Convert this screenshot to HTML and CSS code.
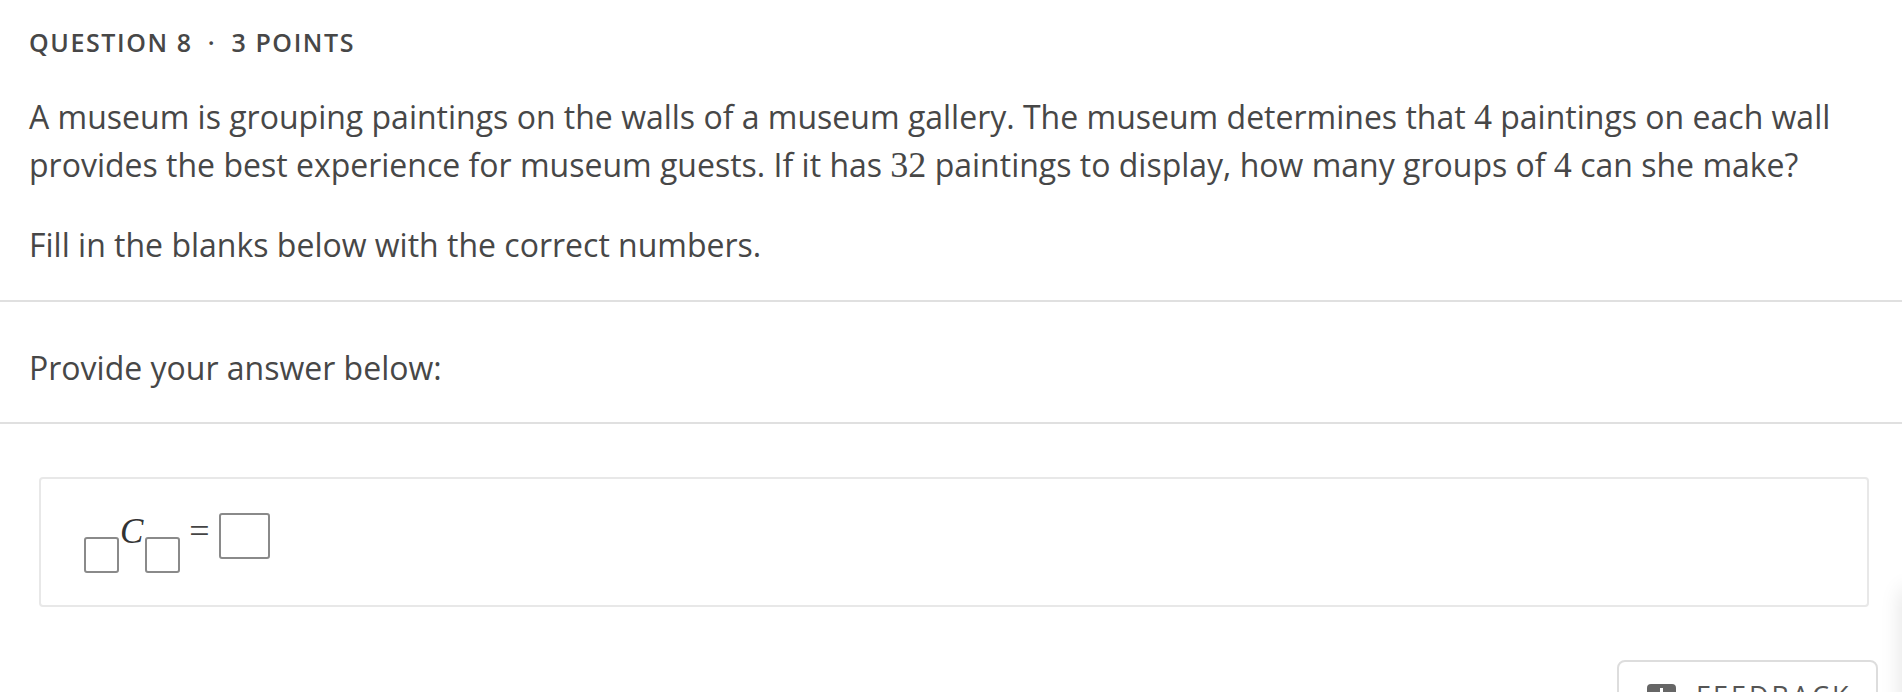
FILE: index.html
```html
<!DOCTYPE html>
<html lang="en">
<head>
<meta charset="utf-8">
<title>Question 8</title>
<link rel="stylesheet" href="styles.css">
</head>
<body>
<main class="page">
  <section class="question">
    <h2 class="q-label">QUESTION 8 <span class="dot">·</span> 3 POINTS</h2>
    <p class="q-text">A museum is grouping paintings on the walls of a museum gallery. The museum determines that <span class="num">4</span> paintings on each wall provides the best experience for museum guests. If it has <span class="num">32</span> paintings to display, how many groups of <span class="num">4</span> can she make?</p>
    <p class="q-text">Fill in the blanks below with the correct numbers.</p>
  </section>
  <section class="prompt">
    <p class="q-text">Provide your answer below:</p>
  </section>
  <section class="answer">
    <div class="answer-box">
      <div class="math">
        <span class="blank small"></span>
        <span class="var">C</span>
        <span class="blank small"></span>
        <span class="eq">=</span>
        <span class="blank big"></span>
      </div>
    </div>
  </section>
</main>
<button class="feedback" type="button">
  <span class="fb-icon"><span class="fb-bar"></span></span>
  <span class="fb-text">FEEDBACK</span>
</button>
<div class="edge-shade"></div>
</body>
</html>
```
FILE: styles.css
```css
html, body {
  margin: 0;
  padding: 0;
  background: #ffffff;
}

body {
  font-family: "Open Sans", "Liberation Sans", sans-serif;
  color: #444444;
  overflow: hidden;
}

.page {
  display: flex;
  flex-direction: column;
}

.question {
  padding: 24px 29px 31px 29px;
  border-bottom: 2px solid #e0e0e0;
}

.q-label {
  margin: 0 0 33px 0;
  font-size: 25px;
  line-height: 36px;
  font-weight: 600;
  letter-spacing: 1.6px;
  color: #474747;
}

.dot {
  margin: 0 7px;
}

.q-text {
  margin: 0;
  font-size: 32px;
  line-height: 48px;
  color: #474747;
}

.q-text + .q-text {
  margin-top: 32px;
}

.num {
  font-family: "Liberation Serif", "Times New Roman", serif;
  font-size: 36px;
  line-height: 1;
}

.prompt {
  padding: 42px 29px 30px 29px;
  border-bottom: 2px solid #e0e0e0;
}

.answer {
  padding: 53px 33px 40px 39px;
}

.answer-box {
  height: 126px;
  border: 2px solid #e8e8e8;
  border-radius: 4px;
  padding: 0 0 0 43px;
}

.math {
  display: flex;
  align-items: flex-start;
  padding-top: 34px;
}

.blank {
  display: block;
  box-sizing: border-box;
  border: 2px solid #8a8a8a;
  border-radius: 3px;
}

.blank.small {
  width: 35px;
  height: 36px;
  margin-top: 24px;
}

.blank.big {
  width: 51px;
  height: 46px;
  margin-left: 9px;
}

.var {
  display: block;
  font-family: "Liberation Serif", "Times New Roman", serif;
  font-style: italic;
  font-size: 35px;
  line-height: 32px;
  margin: 3px 2px 0 1px;
  color: #333333;
}

.eq {
  display: block;
  font-family: "Liberation Serif", "Times New Roman", serif;
  font-size: 36px;
  line-height: 36px;
  margin: 0 0 0 9px;
  color: #444444;
}

.feedback {
  position: fixed;
  right: 24px;
  top: 660px;
  width: 261px;
  height: 64px;
  box-sizing: border-box;
  border: 2px solid #dddddd;
  border-radius: 8px;
  background: #ffffff;
  display: flex;
  align-items: flex-start;
  padding: 22px 0 0 28px;
  gap: 20px;
  font-family: "Open Sans", "Liberation Sans", sans-serif;
}

.fb-icon {
  width: 29px;
  height: 28px;
  background: #666666;
  border-radius: 4px;
  display: flex;
  justify-content: center;
  padding-top: 4px;
  box-sizing: border-box;
}

.fb-bar {
  width: 3px;
  height: 14px;
  background: #ffffff;
}

.fb-text {
  font-size: 27px;
  line-height: 30px;
  letter-spacing: 3px;
  color: #555555;
  font-weight: 400;
  margin-top: -3px;
}

.edge-shade {
  position: fixed;
  right: -24px;
  top: 590px;
  width: 24px;
  height: 200px;
  box-shadow: 0 0 22px rgba(0, 0, 0, 0.12);
  background: #ffffff;
}
```
